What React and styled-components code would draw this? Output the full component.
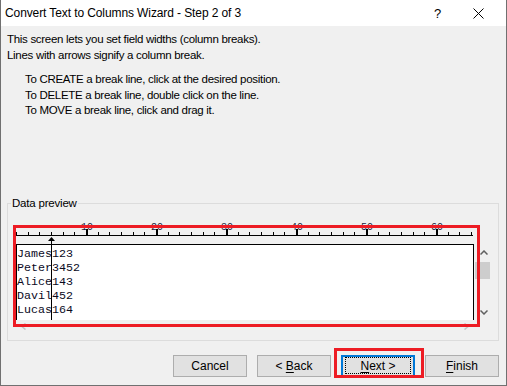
import React from 'react'
import styled, { createGlobalStyle } from 'styled-components'

const GlobalStyle = createGlobalStyle`
  html, body { margin: 0; padding: 0; background: #ffffff; }
  * { box-sizing: border-box; }
`

const uiFont = `"Segoe UI", "Liberation Sans", Arial, sans-serif`
const monoFont = `"Courier New", "Liberation Mono", monospace`

const rows = ['James123', 'Peter3452', 'Alice143', 'Davil452', 'Lucas164']

const Window = styled.div`
  width: 507px;
  height: 386px;
  display: flex;
  flex-direction: column;
  border: 1px solid #707070;
  border-top: none;
  font-family: ${uiFont};
  font-size: 12px;
  color: #000;
  overflow: hidden;
`

const TitleBar = styled.div`
  height: 26px;
  flex: none;
  display: flex;
  align-items: center;
  background: #ffffff;
  padding: 0 7px 0 4px;
`

const Title = styled.div`
  flex: 1;
  font-size: 12px;
  letter-spacing: -0.1px;
`

const TitleButton = styled.div`
  width: 41px;
  height: 26px;
  display: flex;
  align-items: center;
  justify-content: center;
  font-size: 13px;
`

const Content = styled.div`
  flex: 1;
  display: flex;
  flex-direction: column;
  background: #f0f0f0;
  padding: 6px 7px 8px 6px;
`

const Para = styled.div`
  line-height: 15.5px;
  font-size: 11.5px;
  margin-left: ${p => p.$indent || 0}px;
  margin-top: ${p => p.$top || 0}px;
  letter-spacing: -0.3px;
`

const GroupBox = styled.fieldset`
  margin: auto 0 0 0;
  padding: 8px 0 5px 8px;
  border: 1px solid #dcdcdc;
  min-width: 0;
`

const Legend = styled.legend`
  padding: 0 1px;
  margin-left: -5px;
  line-height: 14px;
  font-size: 11.5px;
  letter-spacing: -0.2px;
`

const PreviewArea = styled.div`
  position: relative;
  width: 474px;
`

const Ruler = styled.svg`
  display: block;
`

const PreviewRow = styled.div`
  display: flex;
  height: 76px;
`

const PreviewBox = styled.div`
  position: relative;
  width: 458px;
  height: 76px;
  background: #ffffff;
  border: 1px solid #000;
  border-bottom: none;
  padding-top: 2px;
  font-family: ${monoFont};
  font-size: 11.67px;
  line-height: 14px;
  color: #0a0a1e;
  white-space: pre;
`

const BreakLine = styled.div`
  position: absolute;
  left: ${p => p.$x}px;
  top: 0;
  bottom: 0;
  width: 1px;
  background: #000;
`

const VScroll = styled.div`
  width: 16px;
  display: flex;
  flex-direction: column;
  align-items: flex-start;
`

const Chevron = styled.svg`
  display: block;
  margin-left: 6px;
  margin-top: ${p => p.$top || 0}px;
`

const Thumb = styled.div`
  width: 15px;
  height: 17px;
  margin: 7px 0 0 1px;
  background: #cdcdcd;
`

const HScroll = styled.div`
  width: 458px;
  height: 15px;
  display: flex;
  align-items: center;
  justify-content: space-between;
  padding: 0 5px 2px 5px;
`

const Highlight = styled.div`
  position: absolute;
  border: 3px solid #ed1c24;
  pointer-events: none;
`

const ButtonRow = styled.div`
  display: flex;
  justify-content: flex-end;
  gap: 10px;
  margin-top: 14px;
`

const Button = styled.button`
  position: relative;
  width: 74px;
  height: 22px;
  padding: 0;
  background: #e1e1e1;
  border: ${p => (p.$focused ? '2px solid #0078d7' : '1px solid #adadad')};
  font-family: ${uiFont};
  font-size: 12px;
  color: #000;
  overflow: visible;
  &::after {
    content: '';
    display: ${p => (p.$focused ? 'block' : 'none')};
    position: absolute;
    inset: 0 2px 1px 2px;
    border: 1px dotted #000;
  }
  u { text-decoration-thickness: 1px; text-underline-offset: 2px; }
`

function RulerDrawing() {
  const ticks = []
  for (let i = 0; i <= 39; i++) {
    const x = Math.round(i * 70 / 6)
    const major = i % 6 === 0 && i > 0
    ticks.push(
      <rect key={i} x={x} y={major ? 11 : 14} width={major ? 2 : 1} height={major ? 6 : 3} fill="#000" />
    )
    if (major) {
      ticks.push(
        <text key={'n' + i} x={x + 1} y={12} fontSize="10" fontFamily={monoFont} textAnchor="middle" fill="#1a1a3a">
          {(i / 6) * 10}
        </text>
      )
    }
  }
  return (
    <Ruler width="458" height="26" viewBox="0 0 458 26">
      <rect x="0" y="17" width="457" height="1" fill="#000" />
      {ticks}
      <polygon points="35.5,19 32,23 39,23" fill="#000" />
      <rect x="35" y="22" width="1" height="4" fill="#000" />
    </Ruler>
  )
}

export default function App() {
  return (
    <>
      <GlobalStyle />
      <Window>
        <TitleBar>
          <Title>Convert Text to Columns Wizard - Step 2 of 3</Title>
          <TitleButton>?</TitleButton>
          <TitleButton>
            <svg width="11" height="11" viewBox="0 0 11 11">
              <path d="M0.5 0.5 L10.5 10.5 M10.5 0.5 L0.5 10.5" stroke="#000" strokeWidth="1" />
            </svg>
          </TitleButton>
        </TitleBar>
        <Content>
          <Para>
            This screen lets you set field widths (column breaks).<br />
            Lines with arrows signify a column break.
          </Para>
          <Para $indent={18} $top={9}>
            To CREATE a break line, click at the desired position.<br />
            To DELETE a break line, double click on the line.<br />
            To MOVE a break line, click and drag it.
          </Para>

          <GroupBox>
            <Legend>Data preview</Legend>
            <PreviewArea>
              <RulerDrawing />
              <PreviewRow>
                <PreviewBox>
                  <BreakLine $x={34} />
                  {rows.join('\n')}
                </PreviewBox>
                <VScroll>
                  <Chevron width="8" height="5" viewBox="0 0 8 5" $top={6}>
                    <polyline points="0.5,4.5 4,1 7.5,4.5" fill="none" stroke="#606060" strokeWidth="1.5" />
                  </Chevron>
                  <Thumb />
                  <Chevron width="8" height="5" viewBox="0 0 8 5" $top={31}>
                    <polyline points="0.5,0.5 4,4 7.5,0.5" fill="none" stroke="#606060" strokeWidth="1.5" />
                  </Chevron>
                </VScroll>
              </PreviewRow>
              <HScroll>
                <svg width="5" height="7" viewBox="0 0 5 7">
                  <polyline points="4.5,0.5 1,3.5 4.5,6.5" fill="none" stroke="#c5c5c5" strokeWidth="1.5" />
                </svg>
                <svg width="5" height="7" viewBox="0 0 5 7">
                  <polyline points="0.5,0.5 4,3.5 0.5,6.5" fill="none" stroke="#c5c5c5" strokeWidth="1.5" />
                </svg>
              </HScroll>
              <Highlight style={{ left: -3, top: 7, width: 467, height: 102 }} />
            </PreviewArea>
          </GroupBox>

          <ButtonRow>
            <Button>Cancel</Button>
            <Button>&lt; <u>B</u>ack</Button>
            <Button $focused>
              <u>N</u>ext &gt;
              <Highlight style={{ left: -9, top: -9, right: -11, bottom: -3 }} />
            </Button>
            <Button><u>F</u>inish</Button>
          </ButtonRow>
        </Content>
      </Window>
    </>
  )
}
